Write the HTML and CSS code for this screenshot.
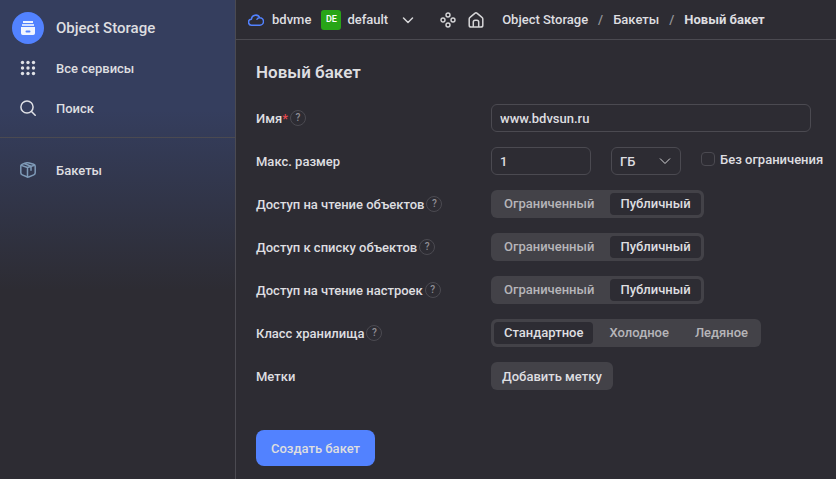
FILE: index.html
```html
<!DOCTYPE html>
<html lang="ru">
<head>
<meta charset="utf-8">
<meta name="viewport" content="width=device-width, initial-scale=1">
<title>Новый бакет — Object Storage</title>
<link rel="stylesheet" href="styles.css">
</head>
<body>
<div class="app">
  <aside class="sidebar">
    <nav class="sidebar-top">
      <a class="side-link side-link-service" href="#">
        <span class="side-icon service-badge">
          <svg width="16" height="16" viewBox="0 0 16 16" fill="#fff">
            <path d="M3 1h10v2H3z" opacity=".9"/>
            <path d="M2 4h12v2H2z" opacity=".75"/>
            <path fill-rule="evenodd" d="M1 7h14v6.200a1.800 1.800 0 0 1-1.800 1.800H2.800A1.800 1.800 0 0 1 1 13.200zM6.500 10.500a1 1 0 0 0 0 2h3a1 1 0 0 0 0-2z" opacity=".92"/>
          </svg>
        </span>
        Object Storage
      </a>
      <a class="side-link" href="#">
        <span class="side-icon">
          <svg width="16" height="16" viewBox="0 0 16 16" fill="#e0e1e6">
            <circle cx="2.500" cy="2.500" r="1.700"/><circle cx="8" cy="2.500" r="1.700"/><circle cx="13.500" cy="2.500" r="1.700"/>
            <circle cx="2.500" cy="8" r="1.700"/><circle cx="8" cy="8" r="1.700"/><circle cx="13.500" cy="8" r="1.700"/>
            <circle cx="2.500" cy="13.500" r="1.700"/><circle cx="8" cy="13.500" r="1.700"/><circle cx="13.500" cy="13.500" r="1.700"/>
          </svg>
        </span>
        Все сервисы
      </a>
      <a class="side-link" href="#">
        <span class="side-icon">
          <svg width="16" height="16" viewBox="0 0 16 16" fill="none" stroke="#e0e1e6" stroke-width="1.500" stroke-linecap="round">
            <circle cx="7" cy="7" r="6.100"/><path d="M11.500 11.500l3.700 3.700"/>
          </svg>
        </span>
        Поиск
      </a>
    </nav>
    <nav class="sidebar-menu">
      <a class="side-link" href="#">
        <span class="side-icon">
          <svg width="16" height="16" viewBox="0 0 16 16" fill="none" stroke="#7f9bb8" stroke-width="1.500" stroke-linejoin="round" stroke-linecap="round">
            <path d="M9.200 1l4.400 1.300q1.600.5 1.600 2.100v6.400q0 1.500-1.400 2.100l-4.600 1.900q-1.200.5-2.400 0l-4.600-1.900Q.8 12.300.8 10.800V4.400q0-1.400 1.200-2L4.800 1.200q2-.8 4.400-.2z"/>
            <path d="M1.200 3.400L7.500 5.500l7-2.300M7.500 5.500v9.500M4.800 1.800l6.200 2.500v4"/>
          </svg>
        </span>
        Бакеты
      </a>
    </nav>
  </aside>

  <div class="content">
    <header class="topbar">
      <a class="cloud" href="#">
        <svg width="16" height="16" viewBox="0 0 16 16" fill="none" stroke="#5282ff" stroke-width="1.500" stroke-linecap="round" stroke-linejoin="round">
          <path d="M11.800 13.200H3.700a3 3 0 0 1-.3-6A4.350 4.350 0 0 1 11.700 5.700a3.750 3.750 0 0 1 .1 7.500zM11.700 5.700q-2 0-2.700 1.600"/>
        </svg>
        bdvme
      </a>
      <button class="folder" type="button">
        <span class="folder-badge">DE</span>
        default
        <svg class="folder-arrow" width="12" height="12" viewBox="0 0 12 12" fill="none" stroke="#d6d6d8" stroke-width="1.500" stroke-linecap="round" stroke-linejoin="round"><path d="M1.500 4L6 8.500 10.500 4"/></svg>
      </button>
      <a class="top-icon" href="#" aria-label="Ресурсы">
        <svg width="16" height="16" viewBox="0 0 16 16" fill="none" stroke="#d6d6d8" stroke-width="1.400">
          <circle cx="8" cy="3" r="2"/><circle cx="3" cy="8" r="2"/><circle cx="13" cy="8" r="2"/><circle cx="8" cy="13" r="2"/>
        </svg>
      </a>
      <a class="top-icon top-icon-home" href="#" aria-label="Главная">
        <svg width="16" height="16" viewBox="0 0 16 16" fill="none" stroke="#d6d6d8" stroke-width="1.500" stroke-linejoin="round">
          <path d="M1.200 6.900q0-1 .8-1.600l4.800-4q1.200-1 2.400 0l4.800 4q.8.6.8 1.600v6.300q0 1.900-1.900 1.900H3.100q-1.900 0-1.900-1.900z"/>
          <path d="M5.300 15V10q0-1.800 1.800-1.800h1.800q1.800 0 1.800 1.800v5"/>
        </svg>
      </a>
      <nav class="crumbs">
        <a href="#">Object Storage</a><span class="slash">/</span><a href="#">Бакеты</a><span class="slash">/</span><strong>Новый бакет</strong>
      </nav>
    </header>

    <main class="page">
      <h1>Новый бакет</h1>
      <form>
        <div class="row">
          <div class="row-label"><label for="name">Имя<span class="required">*</span></label><button class="help" type="button">?</button></div>
          <input class="field field-name" id="name" type="text" value="www.bdvsun.ru">
        </div>
        <div class="row">
          <div class="row-label"><label for="size">Макс. размер</label></div>
          <div class="size">
            <input class="field field-size" id="size" type="text" value="1">
            <div class="select">
              <select class="field" aria-label="Единица"><option>ГБ</option></select>
              <svg class="select-arrow" width="12" height="12" viewBox="0 0 12 12" fill="none" stroke="#d6d6d8"><path d="M1 3.500l5 5 5-5"/></svg>
            </div>
            <label class="check"><input type="checkbox">Без ограничения</label>
          </div>
        </div>
        <div class="row">
          <div class="row-label"><span id="l-read">Доступ на чтение объектов</span><button class="help" type="button">?</button></div>
          <div class="segments" role="radiogroup" aria-labelledby="l-read">
            <label><input type="radio" name="read"><span>Ограниченный</span></label>
            <label><input type="radio" name="read" checked><span>Публичный</span></label>
          </div>
        </div>
        <div class="row">
          <div class="row-label"><span id="l-list">Доступ к списку объектов</span><button class="help" type="button">?</button></div>
          <div class="segments" role="radiogroup" aria-labelledby="l-list">
            <label><input type="radio" name="list"><span>Ограниченный</span></label>
            <label><input type="radio" name="list" checked><span>Публичный</span></label>
          </div>
        </div>
        <div class="row">
          <div class="row-label"><span id="l-conf">Доступ на чтение настроек</span><button class="help" type="button">?</button></div>
          <div class="segments" role="radiogroup" aria-labelledby="l-conf">
            <label><input type="radio" name="conf"><span>Ограниченный</span></label>
            <label><input type="radio" name="conf" checked><span>Публичный</span></label>
          </div>
        </div>
        <div class="row">
          <div class="row-label"><span id="l-class">Класс хранилища</span><button class="help" type="button">?</button></div>
          <div class="segments" role="radiogroup" aria-labelledby="l-class">
            <label><input type="radio" name="class" checked><span>Стандартное</span></label>
            <label><input type="radio" name="class"><span>Холодное</span></label>
            <label><input type="radio" name="class"><span>Ледяное</span></label>
          </div>
        </div>
        <div class="row">
          <div class="row-label"><span>Метки</span></div>
          <button class="button" type="button">Добавить метку</button>
        </div>
        <button class="button button-primary" type="submit">Создать бакет</button>
      </form>
    </main>
  </div>
</div>
</body>
</html>
```
FILE: styles.css
```css
* {
  box-sizing: border-box;
}

:root {
  --bg: #2d2c33;
  --line: #4b4a51;
  --fill: #434248;
  --text: #dedee0;
  --accent: #5282ff;
}

body {
  margin: 0;
  background: var(--bg);
  color: var(--text);
  font: 500 13px/19px Roboto, "Noto Sans", sans-serif;
}

input, select, button {
  font: inherit;
  color: inherit;
}

button {
  border: 0;
  padding: 0;
  background: none;
}

a {
  color: inherit;
  text-decoration: none;
}

svg {
  display: block;
}

.app {
  display: flex;
  min-height: 100vh;
}

.sidebar {
  flex: none;
  width: 236px;
  border-right: 1px solid var(--line);
  background: linear-gradient(#353e5e 0, #353e5e 110px, var(--bg) 290px);
}

.sidebar-top {
  padding: 8px 0 9px;
  border-bottom: 1px solid var(--line);
}

.sidebar-menu {
  padding: 12px 0;
}

.side-link {
  display: flex;
  align-items: center;
  gap: 12px;
  height: 40px;
  padding: 0 12px;
}

.side-link-service {
  font-size: 15px;
}

.side-icon {
  display: grid;
  place-items: center;
  width: 32px;
  height: 32px;
}

.service-badge {
  border-radius: 50%;
  background: var(--accent);
}

.content {
  flex: 1;
  min-width: 0;
}

.topbar {
  display: flex;
  align-items: center;
  height: 40px;
  padding: 0 12px;
  border-bottom: 1px solid var(--line);
}

.cloud {
  display: flex;
  align-items: center;
  gap: 8px;
}

.folder {
  display: flex;
  align-items: center;
  gap: 6px;
  margin-left: 10px;
}

.folder-badge {
  display: grid;
  place-items: center;
  width: 20px;
  height: 20px;
  border-radius: 3px;
  background: #28a517;
  color: #fff;
  font-size: 9px;
  font-weight: 600;
}

.folder-arrow {
  margin-left: 8px;
}

.top-icon {
  margin-left: 26px;
}

.top-icon-home {
  margin-left: 12px;
}

.crumbs {
  display: flex;
  gap: 10px;
  margin-left: 18px;
  white-space: nowrap;
}

.crumbs strong {
  font-weight: 700;
}

.slash {
  color: #96969a;
}

.page {
  padding: 20px;
}

h1 {
  margin: 0 0 20px;
  font-size: 17px;
  line-height: 24px;
  font-weight: 600;
}

.row {
  display: grid;
  grid-template-columns: 235px minmax(0, 320px);
  align-items: center;
  justify-items: start;
  min-height: 28px;
  margin-bottom: 15px;
}

.row-label {
  display: flex;
  align-items: center;
  gap: 2px;
  white-space: nowrap;
}

.required {
  color: #e5484d;
}

.help {
  width: 16px;
  height: 16px;
  border: 1px solid var(--line);
  border-radius: 50%;
  color: #918f96;
  font-size: 10px;
  line-height: 14px;
}

.field {
  width: 100%;
  height: 28px;
  padding: 0 8px;
  border: 1px solid var(--line);
  border-radius: 6px;
  background: transparent;
  appearance: none;
}

.size {
  display: flex;
  gap: 20px;
}

.size .field-size {
  width: 100px;
}

.select {
  position: relative;
  width: 70px;
}

.select-arrow {
  position: absolute;
  top: 8px;
  right: 10px;
  pointer-events: none;
}

.check {
  display: flex;
  align-items: center;
  gap: 5px;
  height: 24px;
  white-space: nowrap;
}

.check input {
  width: 14px;
  height: 14px;
  margin: 0;
  border: 1px solid var(--line);
  border-radius: 4px;
  appearance: none;
}

.segments {
  display: flex;
  gap: 6px;
  padding: 3px;
  border-radius: 6px;
  background: var(--fill);
  white-space: nowrap;
}

.segments label {
  position: relative;
}

.segments input {
  position: absolute;
  inset: 0;
  margin: 0;
  opacity: 0;
}

.segments span {
  display: block;
  padding: 0 10px;
  border-radius: 4px;
  color: #b6b5b9;
  line-height: 22px;
}

.segments input:checked + span {
  background: var(--bg);
  color: var(--text);
}

.button {
  height: 28px;
  padding: 0 11px;
  border-radius: 6px;
  background: var(--fill);
}

.button-primary {
  height: 36px;
  margin-top: 25px;
  padding: 0 15px;
  border-radius: 8px;
  background: var(--accent);
}
```
